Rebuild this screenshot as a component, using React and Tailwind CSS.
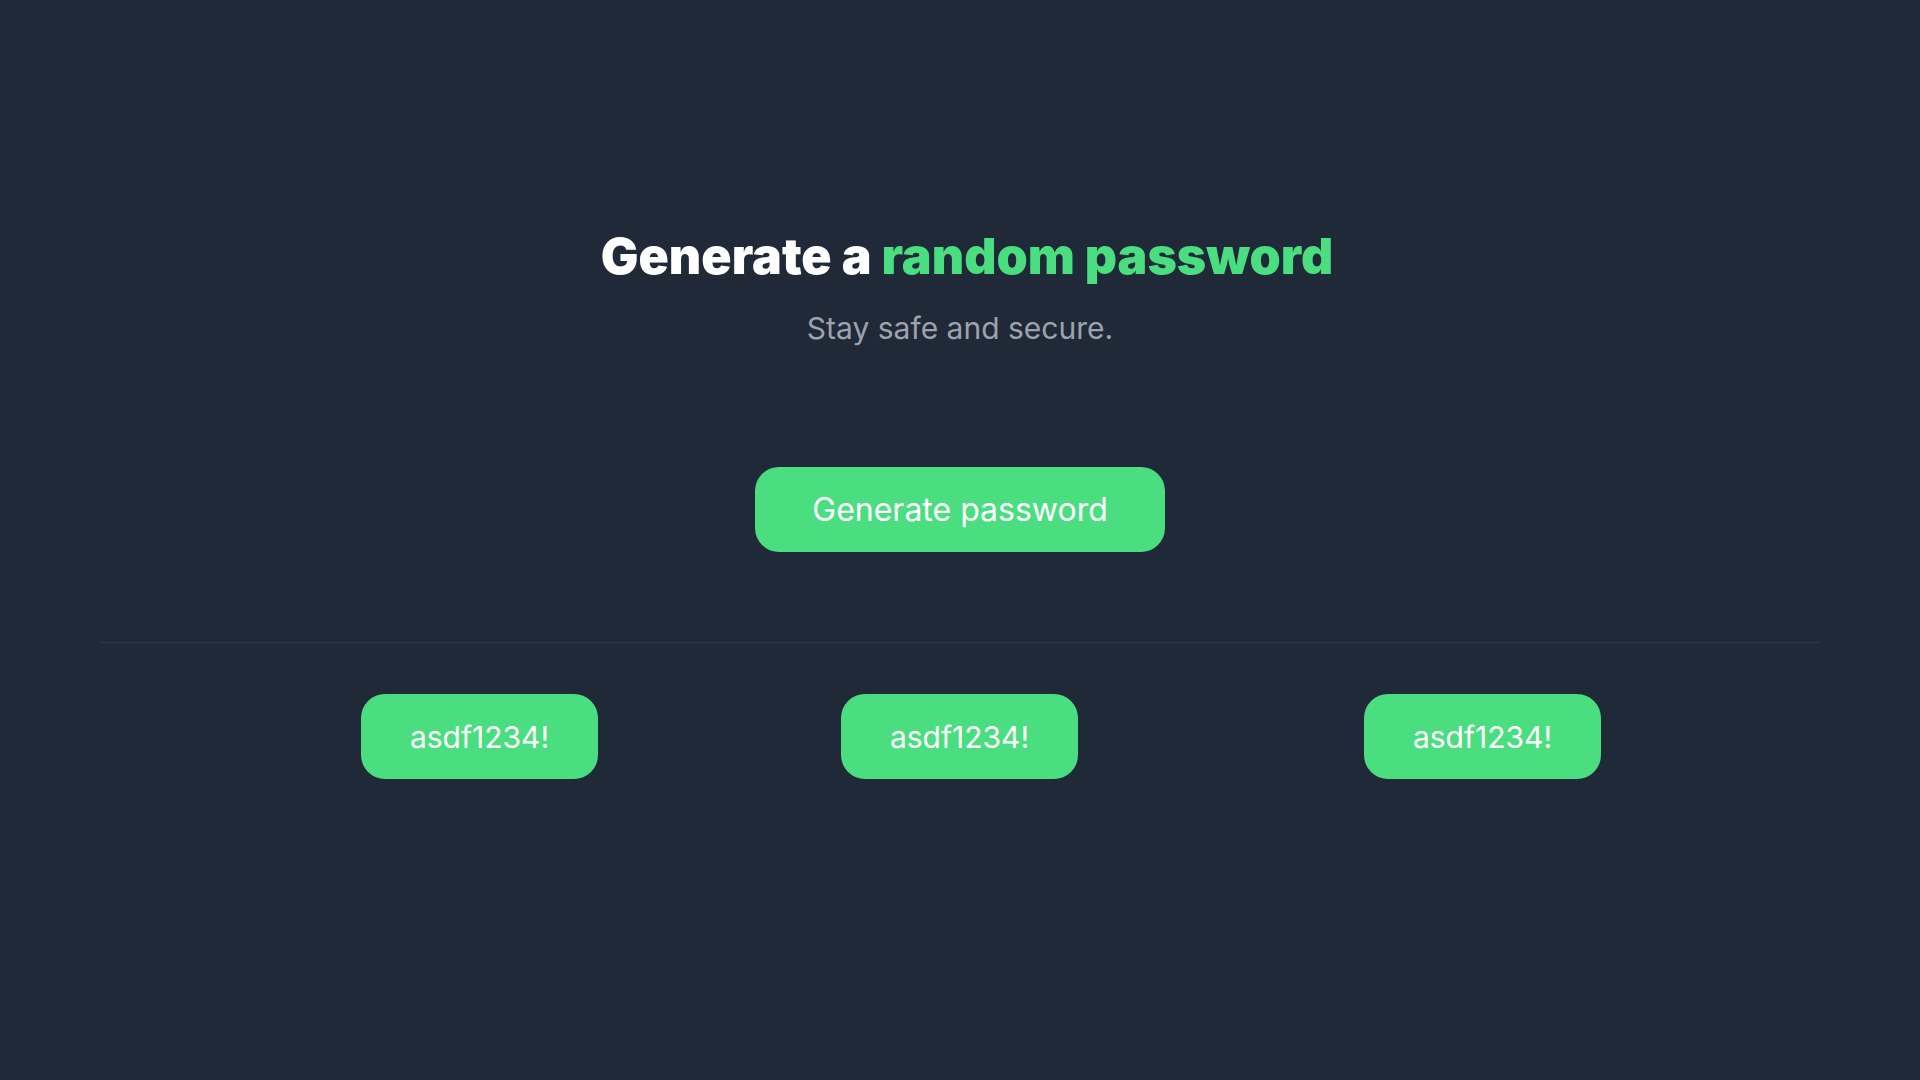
export default function App() {
  const passwords = ["asdf1234!", "asdf1234!", "asdf1234!"];
  return (
    <div className="min-h-screen w-full bg-[#1f2937] font-['Inter','Noto_Sans',sans-serif] flex flex-col items-center">
      <h1 className="mt-[231px] ml-[14px] text-[50px] leading-[50px] font-black text-white">
        Generate a <span className="text-[#4ade80]">random password</span>
      </h1>
      <p className="mt-[29px] text-3xl leading-9 text-[#9ca3af]">Stay safe and secure.</p>
      <button className="mt-[121px] h-[85px] w-[410px] rounded-3xl bg-[#4ade80] text-[32px] leading-9 text-white">
        Generate password
      </button>
      <div className="mt-[90px] w-full px-[99px]">
        <div className="h-px w-full bg-[#1f3d4d]" />
      </div>
      <div className="mt-[51px] flex w-full pl-[361px]">
        <button className="h-[85px] w-[237px] rounded-3xl bg-[#4ade80] text-3xl leading-9 text-white">
          {passwords[0]}
        </button>
        <button className="ml-[243px] h-[85px] w-[237px] rounded-3xl bg-[#4ade80] text-3xl leading-9 text-white">
          {passwords[1]}
        </button>
        <button className="ml-[286px] h-[85px] w-[237px] rounded-3xl bg-[#4ade80] text-3xl leading-9 text-white">
          {passwords[2]}
        </button>
      </div>
    </div>
  );
}
